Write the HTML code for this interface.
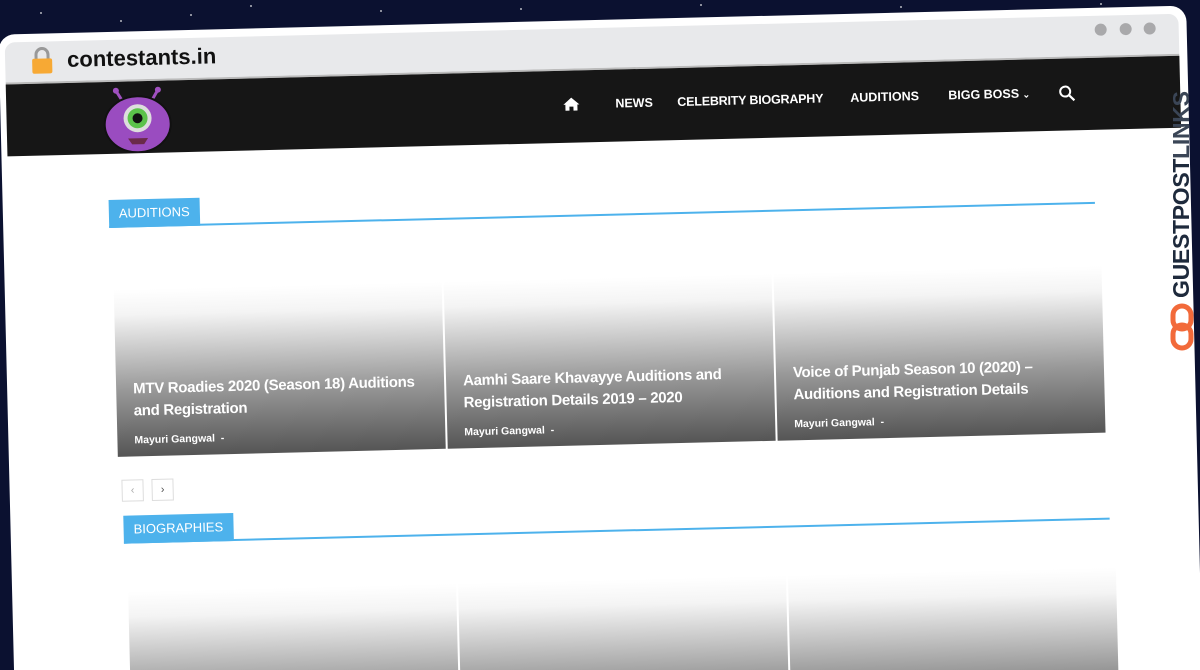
<!DOCTYPE html>
<html style="width:1200px;height:670px;overflow:hidden"><head><style>
*{margin:0;padding:0;box-sizing:border-box}
body{width:1200px;height:670px;overflow:hidden;background:#0b1130;position:relative;font-family:"Liberation Sans",sans-serif}
.star{position:absolute;width:2px;height:2px;background:#fff;border-radius:50%;opacity:.7}
#wrap{position:absolute;left:0;top:0;width:1200px;height:670px;overflow:hidden;clip-path:inset(0 0 0 0)}
#rot{position:absolute;left:0;top:0;width:1200px;height:670px;transform:rotate(-1.4deg);transform-origin:600px 335px}
.frame{position:absolute;left:6px;top:20px;width:1188px;height:680px;background:#fff;border-radius:16px}
.bar{position:absolute;left:12px;top:28px;width:1174px;height:42px;background:#e8e9eb;border-radius:10px 10px 0 0;border-bottom:2px solid #bbb}
.nav{position:absolute;left:12px;top:70px;width:1174px;height:72px;background:#161616}
.url{position:absolute;left:74px;top:34px;font-size:22px;font-weight:bold;color:#111}
.dot{position:absolute;top:36px;width:12px;height:12px;border-radius:50%;background:#a9a9ab}
.ni{position:absolute;top:97px;color:#fff;font-size:12.5px;font-weight:bold}
.lbl{position:absolute;background:#4db2ec;color:#fff;font-size:13px;padding:0 10px;height:28px;line-height:28px}
.line{position:absolute;height:2px;background:#4db2ec}
.card{position:absolute;height:167px;background:linear-gradient(#fff 0%,#f4f4f4 15%,#999 60%,#555 100%)}
.card h3{position:absolute;left:17px;right:10px;bottom:34px;color:#fff;font-size:15px;line-height:22px;font-weight:bold;letter-spacing:-0.3px}
.card span{position:absolute;left:17px;bottom:10px;color:#fff;font-size:10.5px;font-weight:bold}
.pg{position:absolute;width:22px;height:22px;border:1px solid #ddd;color:#aaa;font-size:11px;text-align:center;line-height:20px}
</style></head><body>
<div class="star" style="left:40px;top:12px"></div><div class="star" style="left:250px;top:5px"></div><div class="star" style="left:190px;top:14px"></div><div class="star" style="left:520px;top:8px"></div><div class="star" style="left:700px;top:4px"></div><div class="star" style="left:900px;top:6px"></div><div class="star" style="left:1100px;top:3px"></div><div class="star" style="left:120px;top:20px"></div><div class="star" style="left:380px;top:10px"></div>
<div id="wrap"><div id="rot">
<div class="frame"></div>
<div class="bar"></div>
<svg style="position:absolute;left:38px;top:33px" width="22" height="28" viewBox="0 0 22 28"><path d="M5 13V8a6 6 0 0 1 12 0v5" stroke="#999" stroke-width="3" fill="none"/><rect x="1" y="12" width="20" height="15" rx="2" fill="#f7a934"/></svg>
<div class="url">contestants.in</div>
<div class="dot" style="left:1102px"></div><div class="dot" style="left:1127px"></div><div class="dot" style="left:1151px"></div>
<div class="nav"></div>
<svg style="position:absolute;left:106px;top:75px" width="74" height="66" viewBox="0 0 74 66"><line x1="22" y1="14" x2="16" y2="4" stroke="#a050c0" stroke-width="3"/><line x1="52" y1="14" x2="58" y2="4" stroke="#a050c0" stroke-width="3"/><circle cx="16" cy="4" r="3" fill="#a050c0"/><circle cx="58" cy="4" r="3" fill="#a050c0"/><ellipse cx="37" cy="38" rx="33" ry="28" fill="#9a4cc0" stroke="#111" stroke-width="2"/><circle cx="37" cy="32" r="14" fill="#ddd"/><circle cx="37" cy="32" r="10" fill="#5bc24a"/><circle cx="37" cy="32" r="5" fill="#111"/><path d="M27 52h20l-4 6h-12z" fill="#6a2a4a"/></svg>
<svg style="position:absolute;left:568px;top:96px" width="18" height="15" viewBox="0 0 18 15"><path d="M9 1L1 8h2v6h4v-4h4v4h4V8h2z" fill="#fff"/></svg>
<div class="ni" style="left:621px">NEWS</div>
<div class="ni" style="left:683px;letter-spacing:-0.2px">CELEBRITY BIOGRAPHY</div>
<div class="ni" style="left:856px">AUDITIONS</div>
<div class="ni" style="left:954px">BIGG BOSS <span style="font-size:9px">&#8964;</span></div>
<svg style="position:absolute;left:1064px;top:96px" width="18" height="18" viewBox="0 0 18 18"><circle cx="7" cy="7" r="5" stroke="#fff" stroke-width="2" fill="none"/><line x1="11" y1="11" x2="16" y2="16" stroke="#fff" stroke-width="2.2"/></svg>
<div class="lbl" style="left:112px;top:188px">AUDITIONS</div>
<div class="line" style="left:112px;top:214px;width:986px"></div>
<div class="card" style="left:115px;top:278px;width:328px"><h3>MTV Roadies 2020 (Season 18) Auditions and Registration</h3><span>Mayuri Gangwal &nbsp;-</span></div>
<div class="card" style="left:445px;top:278px;width:328px"><h3>Aamhi Saare Khavayye Auditions and Registration Details 2019 – 2020</h3><span>Mayuri Gangwal &nbsp;-</span></div>
<div class="card" style="left:775px;top:278px;width:328px"><h3>Voice of Punjab Season 10 (2020) – Auditions and Registration Details</h3><span>Mayuri Gangwal &nbsp;-</span></div>
<div class="pg" style="left:118px;top:468px">&lsaquo;</div><div class="pg" style="left:148px;top:468px;color:#555">&rsaquo;</div>
<div class="lbl" style="left:119px;top:504px">BIOGRAPHIES</div>
<div class="line" style="left:119px;top:530px;width:986px"></div>
<div class="card" style="left:122px;top:580px;width:328px"></div>
<div class="card" style="left:452px;top:580px;width:328px"></div>
<div class="card" style="left:782px;top:580px;width:328px"></div>
</div></div>
<div style="position:absolute;left:1168px;top:298px;transform:rotate(-90deg);transform-origin:0 0;font-size:23px;font-weight:bold;color:#1e2a3c;letter-spacing:-0.3px;white-space:nowrap">GUESTPOST<span style="color:#3a4556">LINKS</span></div>
<svg style="position:absolute;left:1170px;top:303px" width="24" height="48" viewBox="0 0 24 48"><rect x="3" y="3" width="18" height="23" rx="9" stroke="#f26a3a" stroke-width="5" fill="none"/><rect x="3" y="22" width="18" height="23" rx="9" stroke="#f26a3a" stroke-width="5" fill="none"/></svg>
</body></html>
